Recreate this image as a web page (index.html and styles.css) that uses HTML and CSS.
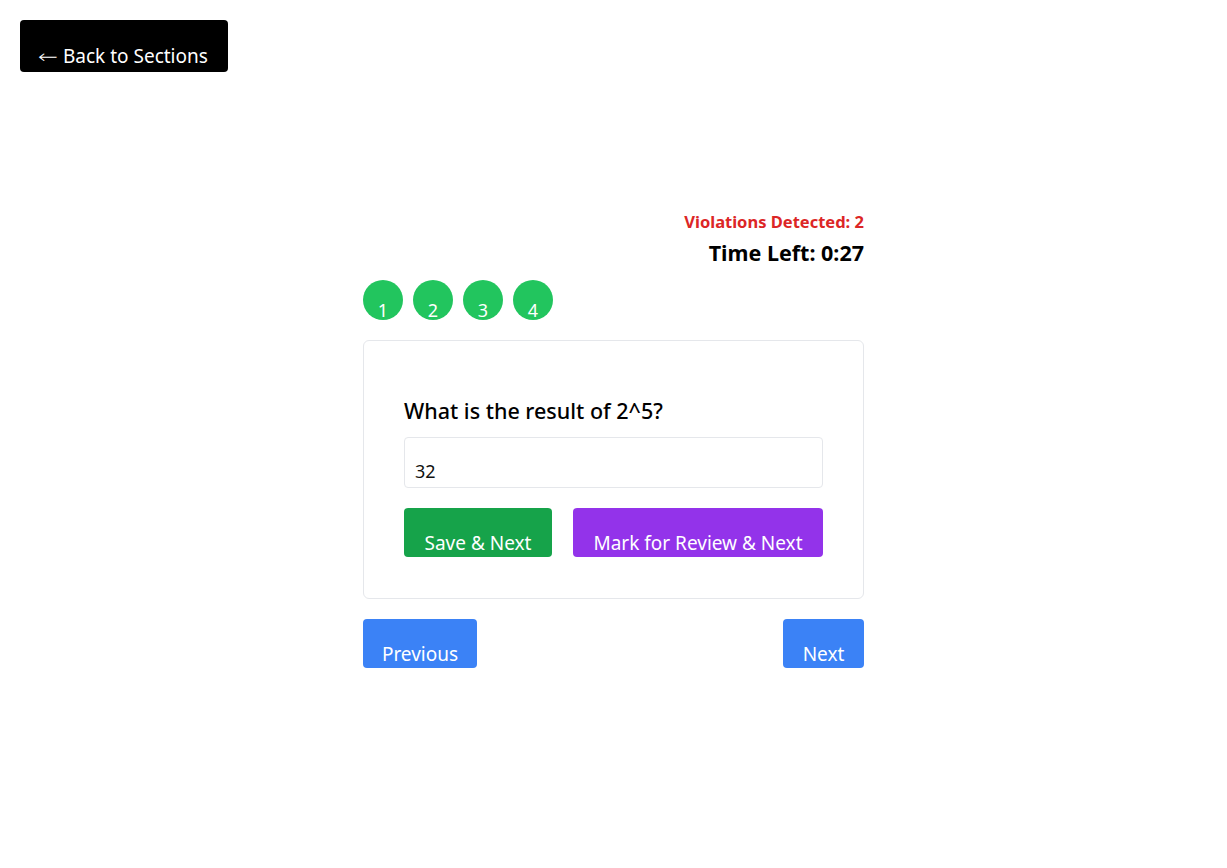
FILE: index.html
```html
<!DOCTYPE html>
<html>
<head>
<meta charset="utf-8">
<link rel="stylesheet" href="styles.css">
</head>
<body>
<div class="page">
  <button class="back-btn"><span class="arrow">←</span> Back to Sections</button>
  <div class="quiz">
    <div class="status">
      <div class="violations">Violations Detected: 2</div>
      <div class="timer">Time Left: 0:27</div>
    </div>
    <div class="qnav">
      <span class="qdot">1</span>
      <span class="qdot">2</span>
      <span class="qdot">3</span>
      <span class="qdot">4</span>
    </div>
    <div class="card">
      <div class="question">What is the result of 2^5?</div>
      <div class="answer">32</div>
      <div class="actions">
        <button class="btn btn-green">Save &amp; Next</button>
        <button class="btn btn-purple">Mark for Review &amp; Next</button>
      </div>
    </div>
    <div class="nav">
      <button class="btn btn-blue">Previous</button>
      <button class="btn btn-blue">Next</button>
    </div>
  </div>
</div>
</body>
</html>
```

FILE: styles.css
```css
* { box-sizing: border-box; }
body {
  margin: 0;
  font-family: "Noto Sans", "Open Sans", sans-serif;
  color: #000;
  background: #fff;
}
.page {
  padding: 20px;
}
button {
  font-family: inherit;
  border: none;
  cursor: pointer;
}
.back-btn {
  display: block;
  background: #000;
  color: #fff;
  font-size: 19px;
  height: 52px;
  padding: 18px 0 0;
  border-radius: 4px;
  line-height: 36px;
  width: 208px;
  text-align: center;
}
.arrow {
  font-family: "DejaVu Sans", sans-serif;
  font-size: 19px;
  font-weight: 300;
  display: inline-block;
  transform: scaleX(1.25);
  margin-right: 2px;
}
.quiz {
  width: 501px;
  margin: 138px auto 0;
}
.status {
  text-align: right;
}
.violations {
  color: #dc2626;
  font-weight: 700;
  font-size: 16.5px;
  line-height: 24px;
}
.timer {
  font-weight: 700;
  font-size: 21.5px;
  line-height: 30px;
  margin-top: 4px;
}
.qnav {
  display: flex;
  gap: 10px;
  margin-top: 12px;
}
.qdot {
  width: 40px;
  height: 40px;
  border-radius: 50%;
  background: #22c55e;
  color: #fff;
  font-size: 18px;
  display: flex;
  justify-content: center;
  align-items: flex-end;
  line-height: 20px;
}
.card {
  margin-top: 20px;
  border: 1px solid #e5e7eb;
  border-radius: 6px;
  padding: 40px 40px 40px;
  height: 259px;
}
.question {
  font-size: 21.5px;
  font-weight: 500;
  line-height: 28px;
  margin-top: 16px;
}
.answer {
  margin-top: 12px;
  height: 51px;
  border: 1px solid #e5e7eb;
  border-radius: 4px;
  padding: 18px 10px 0;
  font-size: 18px;
  line-height: 30px;
  color: #111;
  overflow: hidden;
}
.actions {
  display: flex;
  gap: 21px;
  margin-top: 20px;
}
.btn {
  color: #fff;
  font-size: 19px;
  height: 49px;
  padding: 18px 0 0;
  line-height: 34px;
  border-radius: 4px;
  text-align: center;
}
.btn-green { background: #16a34a; width: 148px; }
.btn-purple { background: #9333ea; flex: 1; }
.btn-blue { background: #3b82f6; }
.nav {
  display: flex;
  justify-content: space-between;
  margin-top: 20px;
}
.nav .btn:first-child { width: 114px; }
.nav .btn:last-child { width: 81px; }
```
